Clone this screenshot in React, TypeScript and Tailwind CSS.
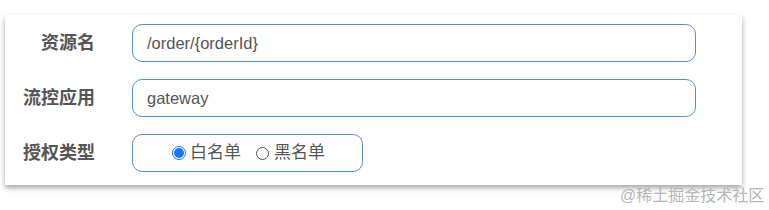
export default function App() {
  const font = { fontFamily: '"Liberation Sans", "Noto Sans CJK SC", sans-serif' };
  return (
    <div className="relative h-[210px] w-[769px] overflow-hidden bg-white" style={font}>
      <div className="ml-[5px] mt-[15px] flex h-[170px] w-[737px] flex-col gap-[17px] bg-white pt-[9px] shadow-[0_3px_5px_rgba(0,0,0,0.35)]">
        <div className="flex items-center">
          <div className="w-[90px] text-right text-[18px] font-bold text-[#555]">资源名</div>
          <div className="ml-[37px] flex h-[38px] w-[564px] items-center rounded-[10px] border border-[#5b8fc8] px-[14px] text-[16.5px] text-[#555]">
            /order/{'{orderId}'}
          </div>
        </div>
        <div className="flex items-center">
          <div className="w-[90px] text-right text-[18px] font-bold text-[#555]">流控应用</div>
          <div className="ml-[37px] flex h-[38px] w-[564px] items-center rounded-[10px] border border-[#5b8fc8] px-[14px] text-[16.5px] text-[#555]">
            gateway
          </div>
        </div>
        <div className="flex items-center">
          <div className="w-[90px] text-right text-[18px] font-bold text-[#555]">授权类型</div>
          <div className="ml-[37px] flex h-[38px] w-[231px] items-center rounded-[10px] border border-[#5b8fc8] pl-[39px] text-[17px] text-[#555]">
            <span className="flex h-[14px] w-[14px] items-center justify-center rounded-full border border-[#1677ff] bg-white">
              <span className="h-[10px] w-[10px] rounded-full bg-[#1677ff]" />
            </span>
            <span className="ml-[4px]">白名单</span>
            <span className="ml-[15px] h-[13px] w-[13px] rounded-full border border-[#555] bg-white" />
            <span className="ml-[5px]">黑名单</span>
          </div>
        </div>
      </div>
      <div className="absolute left-[620px] top-[184px] text-[16px] text-[#b5b5b5]">@稀土掘金技术社区</div>
    </div>
  );
}
